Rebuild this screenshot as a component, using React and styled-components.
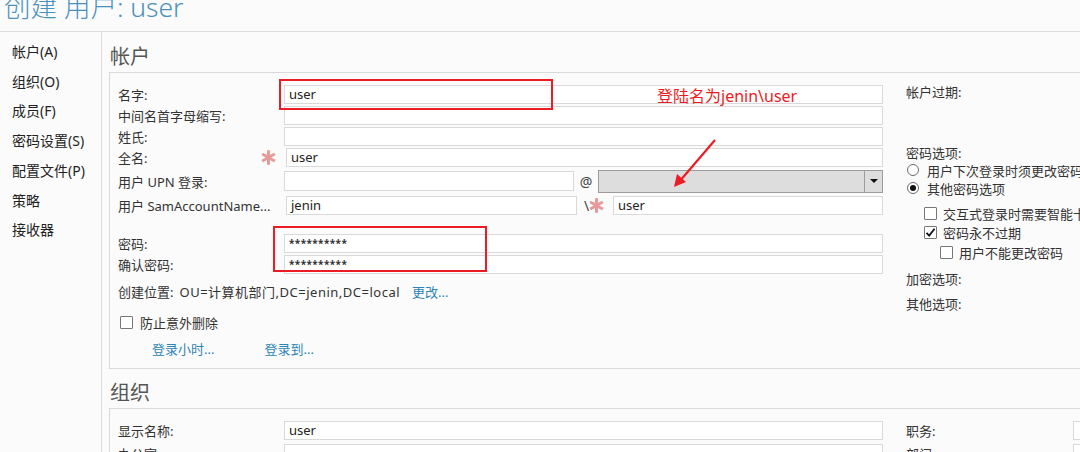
import React from 'react';
import styled, { createGlobalStyle } from 'styled-components';

const GlobalStyle = createGlobalStyle`
  html, body {
    margin: 0;
    padding: 0;
    background: #fbfbfb;
  }
  body {
    font-family: "Noto Sans", "Noto Sans CJK SC", sans-serif;
    font-size: 13px;
    color: #333;
  }
`;

const Page = styled.div`
  position: relative;
  width: 1080px;
  height: 452px;
  overflow: hidden;
  background: #fbfbfb;
`;

const TitleBar = styled.div`
  height: 32px;
  box-sizing: border-box;
  border-bottom: 1px solid #dedede;
  display: flex;
  align-items: flex-end;
  padding: 0 0 10px 4px;
`;

const Title = styled.div`
  font-size: 26.5px;
  line-height: 28px;
  font-weight: 300;
  color: #4a92bb;
  white-space: nowrap;
`;

const Body = styled.div`
  display: flex;
  height: 420px;
`;

const Nav = styled.div`
  width: 102px;
  box-sizing: border-box;
  border-right: 1px solid #dedede;
  padding: 5px 0 0 12px;
  flex-shrink: 0;
`;

const NavItem = styled.div`
  font-size: 14px;
  line-height: 29.7px;
  color: #222;
  white-space: nowrap;
`;

const Main = styled.div`
  flex: 1;
  padding-left: 7px;
  min-width: 0;
`;

const SectionTitle = styled.div`
  font-size: 20px;
  line-height: 30px;
  color: #555;
  padding: ${({ $top }) => $top}px 0 0 1px;
  height: ${({ $top }) => 30 + $top}px;
  box-sizing: border-box;
`;

const Panel = styled.div`
  width: 1000px;
  border: 1px solid #d9d9d9;
  background: #fbfbfb;
  display: flex;
  padding: 11px 0 9px 8px;
  box-sizing: border-box;
`;

const LeftForm = styled.div`
  width: 765px;
  flex-shrink: 0;
`;

const RightCol = styled.div`
  margin-left: 23px;
  display: flex;
  flex-direction: column;
  white-space: nowrap;
`;

const Row = styled.div`
  display: flex;
  align-items: center;
  height: ${({ $h }) => $h || 21}px;
  margin-top: ${({ $mt }) => $mt || 0}px;
  white-space: nowrap;
`;

const Label = styled.div`
  width: ${({ $w }) => $w || 166}px;
  flex-shrink: 0;
  display: flex;
  align-items: center;
  justify-content: space-between;
  padding-right: 8px;
  box-sizing: border-box;
  color: #333;
`;

const Input = styled.div`
  height: ${({ $h }) => $h || 19}px;
  width: ${({ $w }) => ($w ? `${$w}px` : 'auto')};
  flex: ${({ $w }) => ($w ? '0 0 auto' : '1')};
  box-sizing: border-box;
  border: 1px solid #d9d9d9;
  background: #fff;
  padding-left: 4px;
  font-size: 13px;
  line-height: 17px;
  color: #222;
  margin-left: ${({ $ml }) => $ml || 0}px;
`;

const Masked = styled.span`
  font-size: 10px;
  font-weight: 700;
  letter-spacing: 0.4px;
  color: #333;
  position: relative;
  top: -1px;
`;

const Sep = styled.span`
  width: ${({ $w }) => $w}px;
  text-align: center;
  flex-shrink: 0;
  color: #444;
  font-size: 14px;
  display: flex;
  align-items: center;
  justify-content: ${({ $justify }) => $justify || 'center'};
`;

const Select = styled.div`
  flex: 1;
  height: 23px;
  box-sizing: border-box;
  border: 1px solid #9c9c9c;
  background: #dddddd;
  display: flex;
  justify-content: flex-end;
`;

const SelectButton = styled.div`
  width: 17px;
  border-left: 1px solid #9c9c9c;
  display: flex;
  align-items: center;
  justify-content: center;

  &::after {
    content: '';
    border-left: 4px solid transparent;
    border-right: 4px solid transparent;
    border-top: 4px solid #111;
  }
`;

const Value = styled.span`
  margin-left: ${({ $ml }) => $ml || 0}px;
  letter-spacing: 0.5px;
  color: #333;
`;

const LinkText = styled.span`
  color: #2d84b8;
  margin-left: ${({ $ml }) => $ml || 0}px;
`;

const Box = styled.span`
  width: 13px;
  height: 13px;
  box-sizing: border-box;
  border: 1px solid #777;
  background: #fff;
  border-radius: 1px;
  flex-shrink: 0;
  display: flex;
  align-items: center;
  justify-content: center;
  margin-right: ${({ $gap }) => $gap || 6}px;
`;

const Radio = styled.span`
  width: 12px;
  height: 12px;
  box-sizing: border-box;
  border: 1px solid #6a6a6a;
  border-radius: 50%;
  background: #fff;
  flex-shrink: 0;
  margin-right: 8px;
  display: flex;
  align-items: center;
  justify-content: center;

  &::after {
    content: '';
    width: 6px;
    height: 6px;
    border-radius: 50%;
    background: ${({ $on }) => ($on ? '#111' : 'transparent')};
  }
`;

const OptionLine = styled.div`
  display: flex;
  align-items: center;
  height: 18px;
  margin-top: ${({ $mt }) => $mt || 0}px;
  padding-left: ${({ $indent }) => $indent || 0}px;
  color: #333;
`;

const Overlay = styled.div`
  position: absolute;
  pointer-events: none;
`;

const RedBox = styled(Overlay)`
  border: 2px solid #ec1c24;
  box-sizing: border-box;
`;

const Note = styled(Overlay)`
  color: #ec1c24;
  font-size: 16px;
  line-height: 20px;
  white-space: nowrap;
`;

const Star = () => (
  <svg width="15" height="15" viewBox="0 0 16 16">
    <g stroke="#e79a9a" strokeWidth="3.2" strokeLinecap="round">
      <line x1="8" y1="1.5" x2="8" y2="14.5" />
      <line x1="2.4" y1="4.75" x2="13.6" y2="11.25" />
      <line x1="2.4" y1="11.25" x2="13.6" y2="4.75" />
    </g>
  </svg>
);

const Check = () => (
  <svg width="11" height="11" viewBox="0 0 11 11">
    <path d="M1.5 5.8 L4.2 8.6 L9.6 1.8" fill="none" stroke="#111" strokeWidth="1.8" />
  </svg>
);

const Checkbox = ({ checked, gap }) => <Box $gap={gap}>{checked && <Check />}</Box>;

const App = () => {
  return (
    <Page>
      <GlobalStyle />
      <TitleBar>
        <Title>创建 用户: user</Title>
      </TitleBar>
      <Body>
        <Nav>
          {['帐户(A)', '组织(O)', '成员(F)', '密码设置(S)', '配置文件(P)', '策略', '接收器'].map((n) => (
            <NavItem key={n}>{n}</NavItem>
          ))}
        </Nav>
        <Main>
          <SectionTitle $top={10}>帐户</SectionTitle>
          <Panel>
            <LeftForm>
              <Row>
                <Label>名字:</Label>
                <Input>user</Input>
              </Row>
              <Row>
                <Label>中间名首字母缩写:</Label>
                <Input />
              </Row>
              <Row>
                <Label>姓氏:</Label>
                <Input />
              </Row>
              <Row>
                <Label>
                  全名:
                  <Star />
                </Label>
                <Input $ml={2}>user</Input>
              </Row>
              <Row $h={26}>
                <Label>用户 UPN 登录:</Label>
                <Input $w={290} $h={20} />
                <Sep $w={24}>@</Sep>
                <Select>
                  <SelectButton />
                </Select>
              </Row>
              <Row $h={23}>
                <Label>用户 SamAccountName...</Label>
                <Input $w={291} $ml={2}>jenin</Input>
                <Sep $w={36} $justify="flex-start">
                  <span style={{ marginLeft: 7 }}>\</span>
                  <Star />
                </Sep>
                <Input>user</Input>
              </Row>
              <Row $mt={16}>
                <Label>密码:</Label>
                <Input>
                  <Masked>**********</Masked>
                </Input>
              </Row>
              <Row>
                <Label>确认密码:</Label>
                <Input>
                  <Masked>**********</Masked>
                </Input>
              </Row>
              <Row $mt={6}>
                创建位置:
                <Value $ml={6}>OU=计算机部门,DC=jenin,DC=local</Value>
                <LinkText $ml={12}>更改...</LinkText>
              </Row>
              <Row $mt={10}>
                <span style={{ width: 2 }} />
                <Checkbox gap={7} />
                防止意外删除
              </Row>
              <Row $mt={5}>
                <LinkText $ml={34}>登录小时...</LinkText>
                <LinkText $ml={50}>登录到...</LinkText>
              </Row>
            </LeftForm>
            <RightCol>
              <OptionLine $mt={-2}>帐户过期:</OptionLine>
              <OptionLine $mt={43}>密码选项:</OptionLine>
              <OptionLine $indent={1}>
                <Radio />
                用户下次登录时须更改密码
              </OptionLine>
              <OptionLine $indent={1}>
                <Radio $on />
                其他密码选项
              </OptionLine>
              <OptionLine $mt={7} $indent={18}>
                <Checkbox />
                交互式登录时需要智能卡
              </OptionLine>
              <OptionLine $mt={1} $indent={18}>
                <Checkbox checked />
                密码永不过期
              </OptionLine>
              <OptionLine $mt={2} $indent={34}>
                <Checkbox />
                用户不能更改密码
              </OptionLine>
              <OptionLine $mt={8}>加密选项:</OptionLine>
              <OptionLine $mt={7}>其他选项:</OptionLine>
            </RightCol>
          </Panel>
          <SectionTitle $top={9}>组织</SectionTitle>
          <Panel>
            <LeftForm>
              <Row>
                <Label>显示名称:</Label>
                <Input>user</Input>
              </Row>
              <Row $mt={2}>
                <Label>办公室:</Label>
                <Input />
              </Row>
            </LeftForm>
            <RightCol>
              <Row>
                <Label $w={167}>职务:</Label>
                <Input $w={60} />
              </Row>
              <Row $mt={2}>
                <Label $w={167}>部门:</Label>
                <Input $w={60} />
              </Row>
            </RightCol>
          </Panel>
        </Main>
      </Body>

      <RedBox style={{ left: 279, top: 79, width: 274, height: 31 }} />
      <RedBox style={{ left: 273, top: 226, width: 214, height: 46 }} />
      <Note style={{ left: 657, top: 86 }}>登陆名为jenin\user</Note>
      <Overlay style={{ left: 660, top: 130, width: 70, height: 70 }}>
        <svg width="70" height="70" viewBox="0 0 70 70">
          <line x1="55" y1="10" x2="19" y2="52" stroke="#ec1c24" strokeWidth="2.2" />
          <path d="M14 57 L17 44 L26 52 Z" fill="#ec1c24" />
        </svg>
      </Overlay>
    </Page>
  );
};

export default App;
